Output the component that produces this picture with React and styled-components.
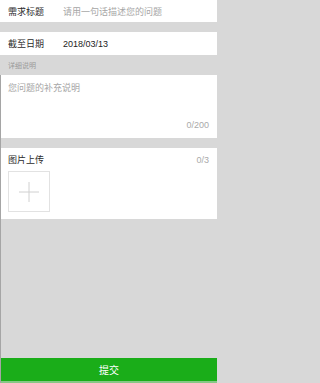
import React from "react";
import styled, { createGlobalStyle } from "styled-components";

const Global = createGlobalStyle`
  html, body { margin: 0; padding: 0; }
  body { font-family: "Liberation Sans", "Noto Sans CJK SC", sans-serif; background: #d8d8d8; }
  * { box-sizing: border-box; }
`;

const Page = styled.div`
  width: 217px;
  height: 383px;
  display: flex;
  flex-direction: column;
  background: #d8d8d8;
  overflow: hidden;
`;

const Row = styled.div`
  height: ${(p) => p.$h}px;
  background: #fff;
  display: flex;
  align-items: center;
  padding: 0 8px;
  font-size: 9px;
  flex: none;
`;

const Label = styled.span`
  width: 55px;
  color: #2b2b2b;
  flex: none;
`;

const Value = styled.span`
  color: ${(p) => (p.$placeholder ? "#a6a6a6" : "#222")};
  white-space: nowrap;
`;

const Gap = styled.div`
  height: 10px;
  flex: none;
`;

const SectionHeader = styled.div`
  height: 20px;
  display: flex;
  align-items: center;
  padding-left: 8px;
  font-size: 7px;
  color: #9a9a9a;
  flex: none;
`;

const Bordered = styled.div`
  flex: 1;
  display: flex;
  flex-direction: column;
  border-left: 1px solid #a5a5a5;
`;

const TextBlock = styled.div`
  height: 63px;
  background: #fff;
  display: flex;
  flex-direction: column;
  justify-content: space-between;
  padding: 6px 8px 8px 7px;
  font-size: 9px;
  flex: none;
`;

const Placeholder = styled.div`
  color: #a6a6a6;
`;

const Counter = styled.div`
  color: #aaa;
  text-align: right;
  font-size: 9px;
`;

const Upload = styled.div`
  height: 71px;
  background: #fff;
  padding: 6px 8px 7px 7px;
  display: flex;
  flex-direction: column;
  gap: 6px;
  flex: none;
`;

const UploadHead = styled.div`
  display: flex;
  justify-content: space-between;
  align-items: center;
  font-size: 9px;
  height: 11px;
  color: #2b2b2b;
`;

const Box = styled.div`
  width: 42px;
  height: 41px;
  border: 1px solid #e2e2e2;
  display: flex;
  align-items: center;
  justify-content: center;
`;

const Filler = styled.div`
  flex: 1;
`;

const Submit = styled.div`
  height: 25px;
  background: #1aad19;
  border-bottom: 2px solid #86c886;
  color: #fff;
  font-size: 10px;
  display: flex;
  align-items: center;
  justify-content: center;
  flex: none;
`;

export default function App() {
  return (
    <>
      <Global />
      <Page>
        <Row $h={22}>
          <Label>需求标题</Label>
          <Value $placeholder>请用一句话描述您的问题</Value>
        </Row>
        <Gap />
        <Row $h={23}>
          <Label>截至日期</Label>
          <Value>2018/03/13</Value>
        </Row>
        <SectionHeader>详细说明</SectionHeader>
        <Bordered>
          <TextBlock>
            <Placeholder>您问题的补充说明</Placeholder>
            <Counter>0/200</Counter>
          </TextBlock>
          <Gap />
          <Upload>
            <UploadHead>
              <span>图片上传</span>
              <Counter as="span">0/3</Counter>
            </UploadHead>
            <Box>
              <svg width="22" height="22" viewBox="0 0 22 22">
                <path d="M11 1V21M1 11H21" stroke="#d0d0d0" strokeWidth="1" fill="none" />
              </svg>
            </Box>
          </Upload>
          <Filler />
          <Submit>提交</Submit>
        </Bordered>
      </Page>
    </>
  );
}
